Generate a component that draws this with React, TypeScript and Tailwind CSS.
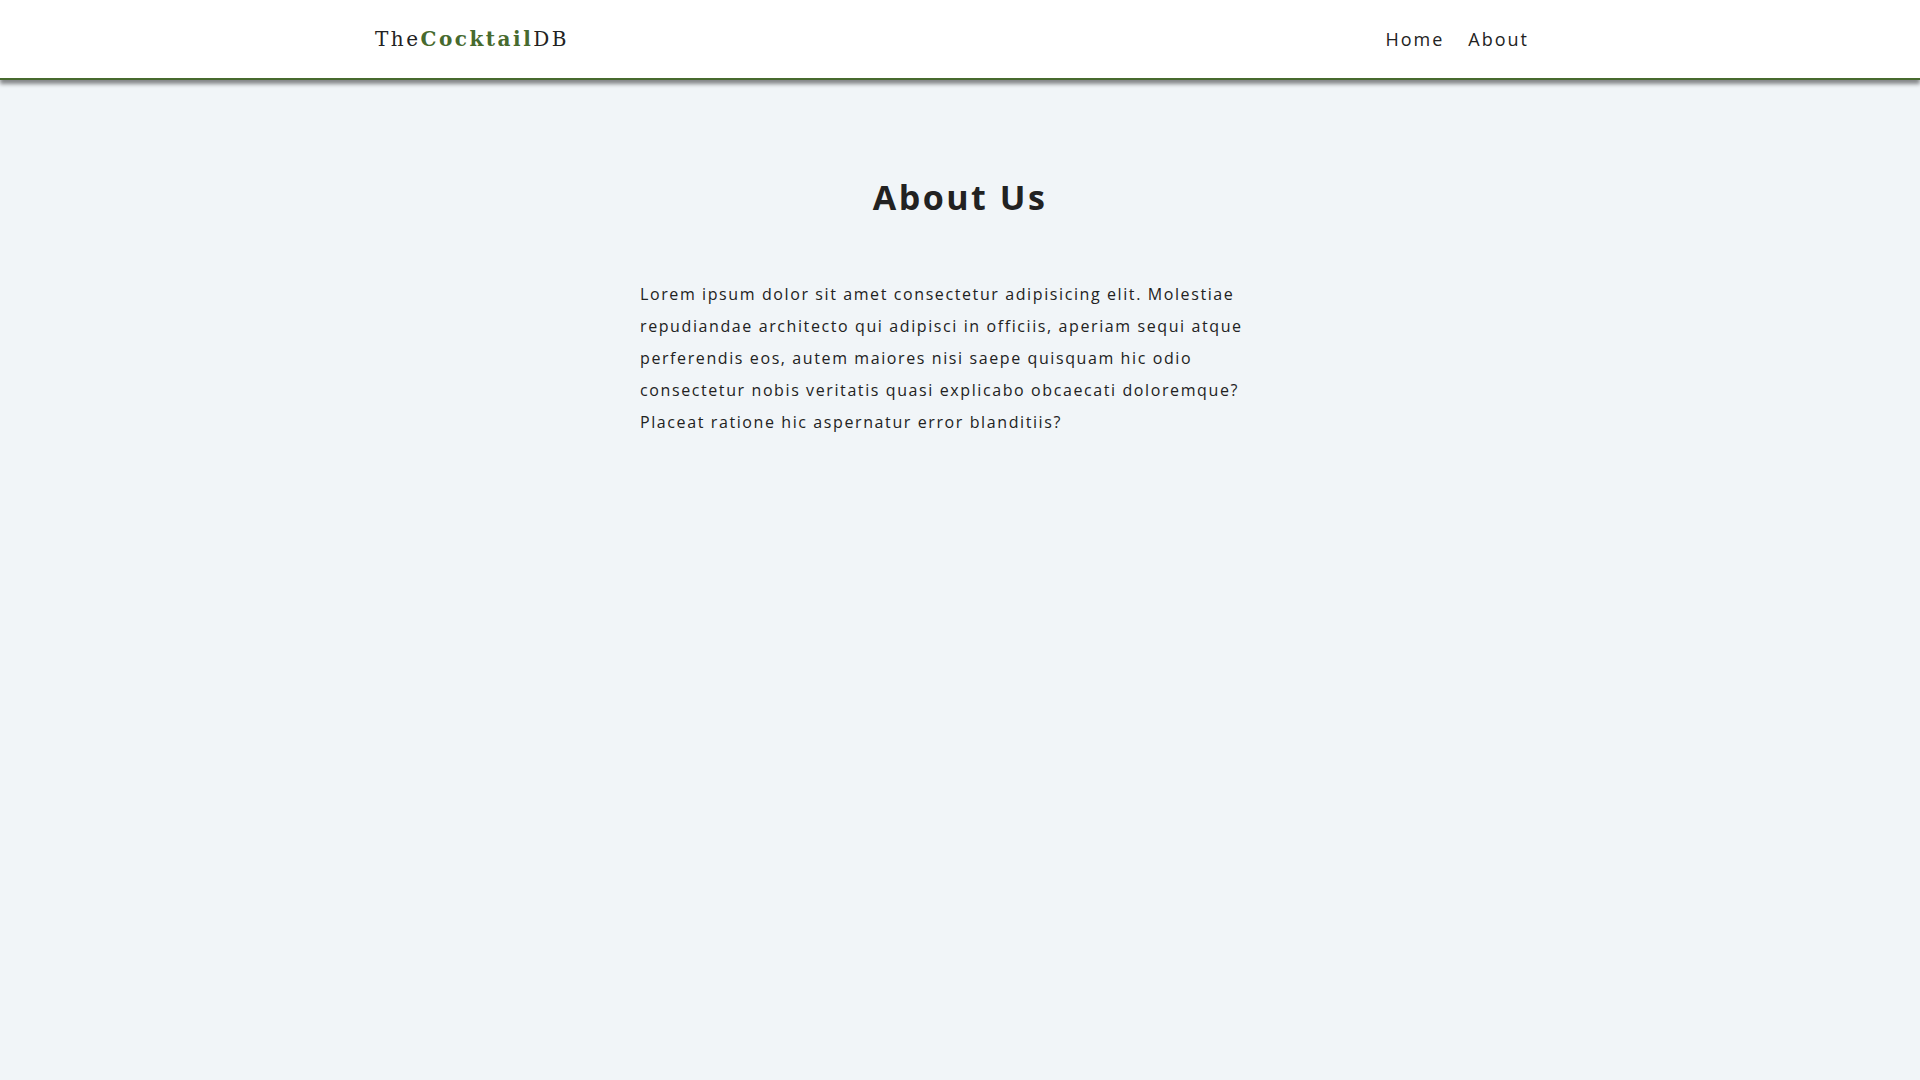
import React from "react";

const links = [
  { label: "Home", href: "#" },
  { label: "About", href: "#" },
];

const Navbar: React.FC = () => {
  return (
    <nav className="h-20 bg-white border-b-2 border-[#476a2e] shadow-[0_4px_4px_rgba(0,0,0,0.45)] flex items-center">
      <div className="w-[90vw] max-w-[1170px] mx-auto flex items-center justify-between">
        <a
          href="#"
          className="text-[20px] tracking-[2.5px] text-[#222] font-['DejaVu_Serif',serif]"
        >
          The<span className="font-bold text-[#476a2e]">Cocktail</span>DB
        </a>
        <ul className="flex items-center mr-1">
          {links.map((link) => (
            <li key={link.label}>
              <a
                href={link.href}
                className="block px-3 py-1 text-[18px] tracking-[2px] text-[#222]"
              >
                {link.label}
              </a>
            </li>
          ))}
        </ul>
      </div>
    </nav>
  );
};

const About: React.FC = () => {
  return (
    <section className="py-20">
      <div className="w-[85vw] max-w-[640px] mx-auto">
        <h1 className="mt-3 mb-[55px] text-[34px] font-bold tracking-[2.5px] text-center text-[#222]">
          About Us
        </h1>
        <p className="text-base leading-8 tracking-[1.6px] text-[#222]">
          Lorem ipsum dolor sit amet consectetur adipisicing elit. Molestiae
          repudiandae architecto qui adipisci in officiis, aperiam sequi atque
          perferendis eos, autem maiores nisi saepe quisquam hic odio
          consectetur nobis veritatis quasi explicabo obcaecati doloremque?
          Placeat ratione hic aspernatur error blanditiis?
        </p>
      </div>
    </section>
  );
};

export default function App() {
  return (
    <div className="min-h-screen bg-[#f1f5f8] font-['Open_Sans',sans-serif]">
      <Navbar />
      <About />
    </div>
  );
}
